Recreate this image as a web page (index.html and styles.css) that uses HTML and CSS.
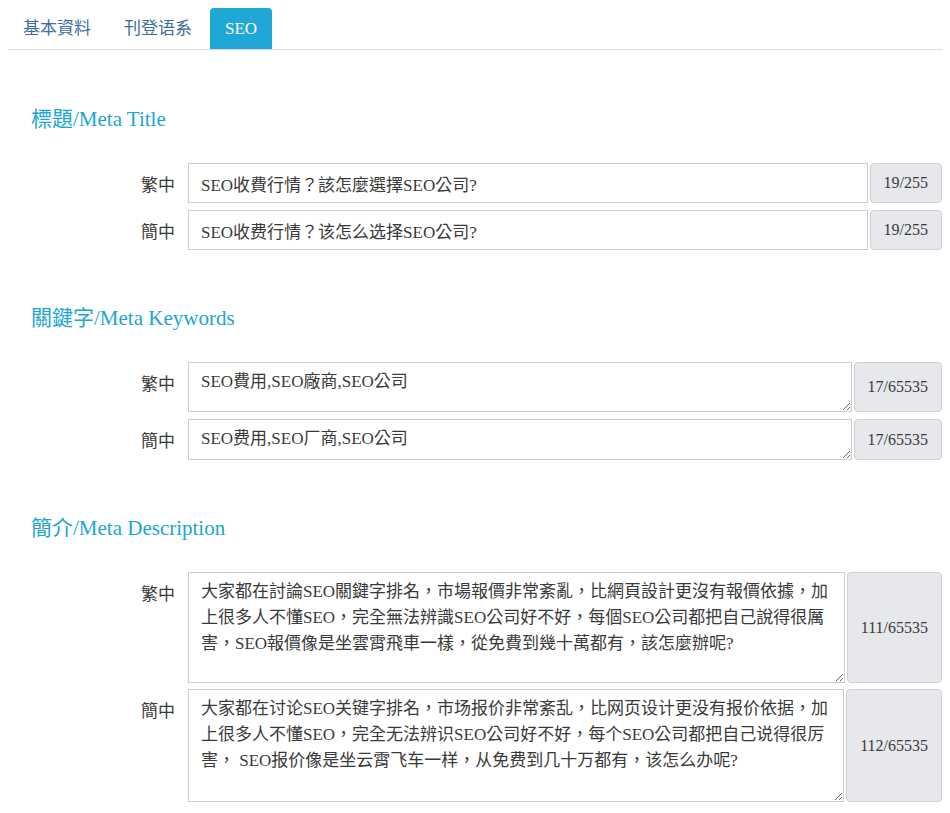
FILE: index.html
```html
<!DOCTYPE html>
<html lang="zh-Hant">
<head>
<meta charset="utf-8">
<title>SEO</title>
<link rel="stylesheet" href="styles.css">
</head>
<body>
<nav class="tabs">
  <a class="tab">基本資料</a>
  <a class="tab">刊登语系</a>
  <a class="tab active">SEO</a>
</nav>

<section class="section">
  <h2 class="section-title first">標題/Meta Title</h2>
  <div class="rows">
    <div class="row">
      <label class="row-label">繁中</label>
      <div class="group">
        <input class="field field-input" type="text" value="SEO收費行情？該怎麼選擇SEO公司?">
        <span class="addon">19/255</span>
      </div>
    </div>
    <div class="row">
      <label class="row-label">簡中</label>
      <div class="group">
        <input class="field field-input" type="text" value="SEO收费行情？该怎么选择SEO公司?">
        <span class="addon">19/255</span>
      </div>
    </div>
  </div>
</section>

<section class="section">
  <h2 class="section-title">關鍵字/Meta Keywords</h2>
  <div class="rows">
    <div class="row">
      <label class="row-label">繁中</label>
      <div class="group">
        <textarea class="field field-area kw-1">SEO費用,SEO廠商,SEO公司</textarea>
        <span class="addon">17/65535</span>
      </div>
    </div>
    <div class="row">
      <label class="row-label">簡中</label>
      <div class="group">
        <textarea class="field field-area kw-2">SEO费用,SEO厂商,SEO公司</textarea>
        <span class="addon">17/65535</span>
      </div>
    </div>
  </div>
</section>

<section class="section">
  <h2 class="section-title">簡介/Meta Description</h2>
  <div class="rows rows-desc">
    <div class="row">
      <label class="row-label">繁中</label>
      <div class="group">
        <textarea class="field field-area desc-1">大家都在討論SEO關鍵字排名，市場報價非常紊亂，比網頁設計更沒有報價依據，加上很多人不懂SEO，完全無法辨識SEO公司好不好，每個SEO公司都把自己說得很厲害，SEO報價像是坐雲霄飛車一樣，從免費到幾十萬都有，該怎麼辦呢?</textarea>
        <span class="addon">111/65535</span>
      </div>
    </div>
    <div class="row">
      <label class="row-label">簡中</label>
      <div class="group">
        <textarea class="field field-area desc-2">大家都在讨论SEO关键字排名，市场报价非常紊乱，比网页设计更没有报价依据，加上很多人不懂SEO，完全无法辨识SEO公司好不好，每个SEO公司都把自己说得很厉害， SEO报价像是坐云霄飞车一样，从免费到几十万都有，该怎么办呢?</textarea>
        <span class="addon">112/65535</span>
      </div>
    </div>
  </div>
</section>
</body>
</html>
```

FILE: styles.css
```css
html, body {
  background: #ffffff;
}

body {
  margin: 8px;
  font-family: "Liberation Serif", "Noto Sans CJK TC", serif;
  font-size: 17px;
  color: #3a3a3a;
}

.tabs {
  display: flex;
  gap: 3px;
  border-bottom: 1px solid #dddddd;
  margin-right: -8px;
}

.tab {
  display: block;
  height: 41px;
  line-height: 42px;
  padding: 0 15px;
  color: #3d6c9f;
  border-radius: 4px 4px 0 0;
  text-decoration: none;
  cursor: pointer;
}

.tab.active {
  background: #1fa8d7;
  color: #ffffff;
}

.section-title {
  margin: 53px 0 29px 23px;
  font-size: 21px;
  line-height: 30px;
  font-weight: normal;
  color: #20a5d3;
}

.section-title.first {
  margin-top: 54px;
}

.rows {
  display: flex;
  flex-direction: column;
  gap: 7px;
}

.rows-desc {
  gap: 6px;
}

.row {
  display: flex;
  align-items: flex-start;
}

.row-label {
  width: 167px;
  margin-right: 13px;
  padding-top: 10px;
  line-height: 26px;
  text-align: right;
  flex: none;
}

.group {
  flex: 1;
  display: flex;
  gap: 2px;
  min-width: 0;
}

.field {
  flex: 1;
  min-width: 0;
  box-sizing: border-box;
  margin: 0;
  border: 1px solid #cccccc;
  border-radius: 0;
  background: #ffffff;
  font-family: "Liberation Serif", "Noto Sans CJK TC", serif;
  font-size: 17px;
  color: #3a3a3a;
  outline: none;
}

.field-input {
  height: 40px;
  padding: 0 12px;
}

.field-area {
  display: block;
  padding: 6px 10px 6px 12px;
  line-height: 26px;
  resize: vertical;
  overflow: hidden;
}

.kw-1 { height: 50px; }
.kw-2 { height: 41px; }
.desc-1 { height: 111px; }
.desc-2 { height: 113px; }

.addon {
  flex: none;
  display: flex;
  align-items: center;
  justify-content: center;
  padding: 0 13px;
  border: 1px solid #cfd1d5;
  border-radius: 4px;
  background: #e6e8ec;
  font-size: 16px;
  color: #3a3a3a;
}
```
